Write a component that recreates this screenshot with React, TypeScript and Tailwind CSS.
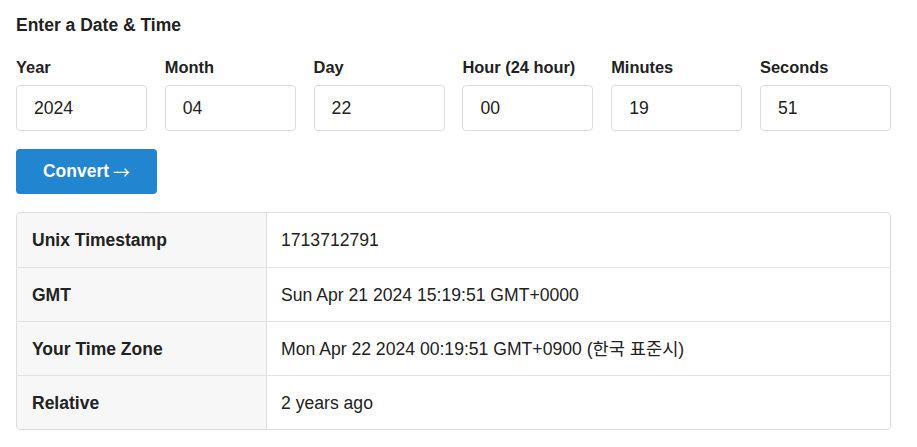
import React from "react";

const fields = [
  { label: "Year", value: "2024" },
  { label: "Month", value: "04" },
  { label: "Day", value: "22" },
  { label: "Hour (24 hour)", value: "00" },
  { label: "Minutes", value: "19" },
  { label: "Seconds", value: "51" },
];

const rows = [
  { k: "Unix Timestamp", v: "1713712791" },
  { k: "GMT", v: "Sun Apr 21 2024 15:19:51 GMT+0000" },
  { k: "Your Time Zone", v: "Mon Apr 22 2024 00:19:51 GMT+0900 (한국 표준시)" },
  { k: "Relative", v: "2 years ago" },
];

export default function App() {
  return (
    <div
      className="bg-white text-[#222] pl-4 pt-[15px] min-h-[447px]"
      style={{ fontFamily: '"Liberation Sans", Arial, "Noto Sans CJK KR", sans-serif' }}
    >
      <div className="w-[875px]">
        <h2 className="text-[17.5px] leading-5 font-bold">Enter a Date &amp; Time</h2>
        <div className="grid grid-cols-6 gap-x-[17.8px] mt-[22px]">
          {fields.map((f) => (
            <div key={f.label} className="flex flex-col">
              <label className="text-[16.4px] leading-5 font-bold">{f.label}</label>
              <input
                readOnly
                value={f.value}
                className="mt-2 h-[46px] w-full border border-[#dddddd] rounded-[4px] px-[17px] text-[17.6px] text-[#222] outline-none bg-white"
                style={{ fontFamily: '"Liberation Sans", Arial, sans-serif' }}
              />
            </div>
          ))}
        </div>
        <button
          className="mt-[18px] h-[45px] w-[141px] rounded-[4px] bg-[#2185d0] text-white font-bold text-[17.5px] flex items-center justify-center"
          style={{ fontFamily: '"Liberation Sans", Arial, sans-serif' }}
        >
          Convert
          <span
            className="ml-[4px] font-normal text-[17px]"
            style={{ fontFamily: '"Noto Sans CJK KR", "DejaVu Sans", sans-serif' }}
          >
            →
          </span>
        </button>
        <div className="mt-[18px] border border-[#dddddd] rounded-[4px] overflow-hidden">
          {rows.map((r, i) => (
            <div
              key={r.k}
              className={`flex h-[54px] ${i > 0 ? "border-t border-[#e2e2e2]" : ""}`}
            >
              <div className="w-[250px] shrink-0 bg-[#f7f7f7] border-r border-[#dddddd] flex items-center pl-[15px] pt-[1px] font-bold text-[17.5px]">
                {r.k}
              </div>
              <div className="flex-1 flex items-center pl-[14px] pt-[1px] text-[17.6px]">{r.v}</div>
            </div>
          ))}
        </div>
      </div>
    </div>
  );
}
